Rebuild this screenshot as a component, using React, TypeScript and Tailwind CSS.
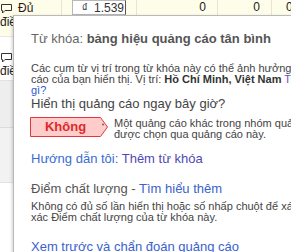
import React from "react";

function Bubble() {
  return (
    <svg width="12" height="12" viewBox="0 0 12 12" className="shrink-0">
      <path d="M1.5 2.5 H11.5 V8.5 H5 L2.5 11 V8.5 H1.5 Z" fill="none" stroke="#333" strokeWidth="1" />
    </svg>
  );
}

export default function App() {
  return (
    <div className="relative w-[291px] h-[252px] overflow-hidden bg-white font-['Liberation_Sans',Arial,sans-serif]">
      {/* background table */}
      <div className="flex flex-col h-full">
        {/* row A */}
        <div className="h-[36px] bg-[#fdfde9] flex shrink-0">
          <div className="w-[62px] border-r border-[#e6e6d6] shrink-0 text-[12px] leading-[15px] text-[#2a1a1a]">
            <div className="flex items-start pt-[1px]">
              <div className="pt-[1px] pl-[0px]"><Bubble /></div>
              <span className="ml-[6px] whitespace-nowrap">Đủ</span>
            </div>
            <div className="whitespace-nowrap text-[#222] -mt-[1px]">điều kiện</div>
          </div>
          <div className="w-[75px] border-r border-[#e6e6d6] shrink-0 pl-[10px]">
            <div className="w-[54px] h-[15px] bg-white border border-[#b8b8b8] border-r-[#555] flex items-center justify-end pr-[1px] text-[12px] text-[#333] whitespace-nowrap">
              <span className="mr-[6px]">₫</span>1.539
            </div>
          </div>
          <div className="w-[81px] border-r border-[#e6e6d6] shrink-0 text-right pr-[11px] text-[12px] leading-[15px] text-[#222]">0</div>
          <div className="w-[54px] border-r border-[#e6e6d6] shrink-0 text-right pr-[11px] text-[12px] leading-[15px] text-[#222]">0</div>
          <div className="flex-1 pl-[14px] text-[12px] leading-[15px] text-[#222]">0</div>
        </div>
        {/* row B */}
        <div className="h-[44px] bg-white border-t border-[#e8e8e8] shrink-0 text-[12px] leading-[15px] text-[#222]">
          <div className="pt-[13px] flex"><div className="pt-[1px]"><Bubble /></div><span className="ml-[6px]">Đủ</span></div>
          <div className="whitespace-nowrap -mt-[1px]">điều kiện</div>
        </div>
        {/* row C */}
        <div className="h-[47px] bg-[#eeeeee] border-t border-[#e2e2e2] shrink-0" />
        {/* row D */}
        <div className="h-[55px] bg-[#f2f2f2] border-t border-[#dcdcdc] shrink-0" />
        {/* row E */}
        <div className="flex-1 bg-white border-t border-[#e2e2e2]" />
      </div>

      {/* popup */}
      <div className="absolute left-[13px] top-[15px] w-[420px] h-[300px] bg-white border border-[#b9b9b9] shadow-[-1px_1px_3px_rgba(0,0,0,0.18)] pl-[17px] overflow-hidden">
        <div className="mt-[15px] text-[13px] leading-[15px] text-[#666] whitespace-nowrap">
          Từ khóa: <b className="text-[#555]">bảng hiệu quảng cáo tân bình</b>
        </div>
        <div className="mt-[17px] text-[11px] leading-[11px] text-[#444] whitespace-nowrap">
          <div>Các cụm từ vị trí trong từ khóa này có thể ảnh hưởng đến nơi quảng</div>
          <div>
            cáo của bạn hiển thị. Vị trí: <b className="text-[#333]">Hồ Chí Minh, Việt Nam</b>{" "}
            <span className="text-[#6a50c4]">Trực tiếp nghĩa là</span>
          </div>
          <div className="text-[#3358cc]">gì?</div>
        </div>
        <div className="text-[13px] leading-[15px] text-[#444] whitespace-nowrap">Hiển thị quảng cáo ngay bây giờ?</div>
        <div className="mt-[6px] flex items-start">
          <div className="relative w-[79px] h-[20px] -ml-[1px] shrink-0">
            <svg className="absolute inset-0" width="79" height="20" viewBox="0 0 79 20">
              <polygon points="0.5,0.5 70.5,0.5 77.5,10 70.5,19.5 0.5,19.5" fill="#ffcccc" stroke="#e2383c" strokeWidth="1" />
              <circle cx="73" cy="7.5" r="1" fill="#666" />
            </svg>
            <div className="relative w-[71px] h-[20px] flex items-center justify-center text-[13px] font-bold text-[#dd2a2a]">Không</div>
          </div>
          <div className="ml-[5px] text-[11px] leading-[11px] text-[#444] whitespace-nowrap pt-[1px]">
            <div>Một quảng cáo khác trong nhóm quảng cáo này đã</div>
            <div>được chọn qua quảng cáo này.</div>
          </div>
        </div>
        <div className="mt-[11px] text-[13px] leading-[15px] whitespace-nowrap">
          <span className="text-[#3a6cd4]">Hướng dẫn tôi: </span>
          <span className="text-[#5248b4]">Thêm từ khóa</span>
        </div>
        <div className="mt-[15px] text-[13px] leading-[15px] whitespace-nowrap">
          <span className="text-[#555]">Điểm chất lượng - </span>
          <span className="text-[#3a62cc]">Tìm hiểu thêm</span>
        </div>
        <div className="mt-[5px] text-[11px] leading-[11px] text-[#444] whitespace-nowrap">
          <div>Không có đủ số lần hiển thị hoặc số nhấp chuột để xác định chính</div>
          <div>xác Điểm chất lượng của từ khóa này.</div>
        </div>
        <div className="mt-[16px] text-[13px] leading-[15px] text-[#3a62cc] whitespace-nowrap">Xem trước và chẩn đoán quảng cáo</div>
      </div>
    </div>
  );
}
